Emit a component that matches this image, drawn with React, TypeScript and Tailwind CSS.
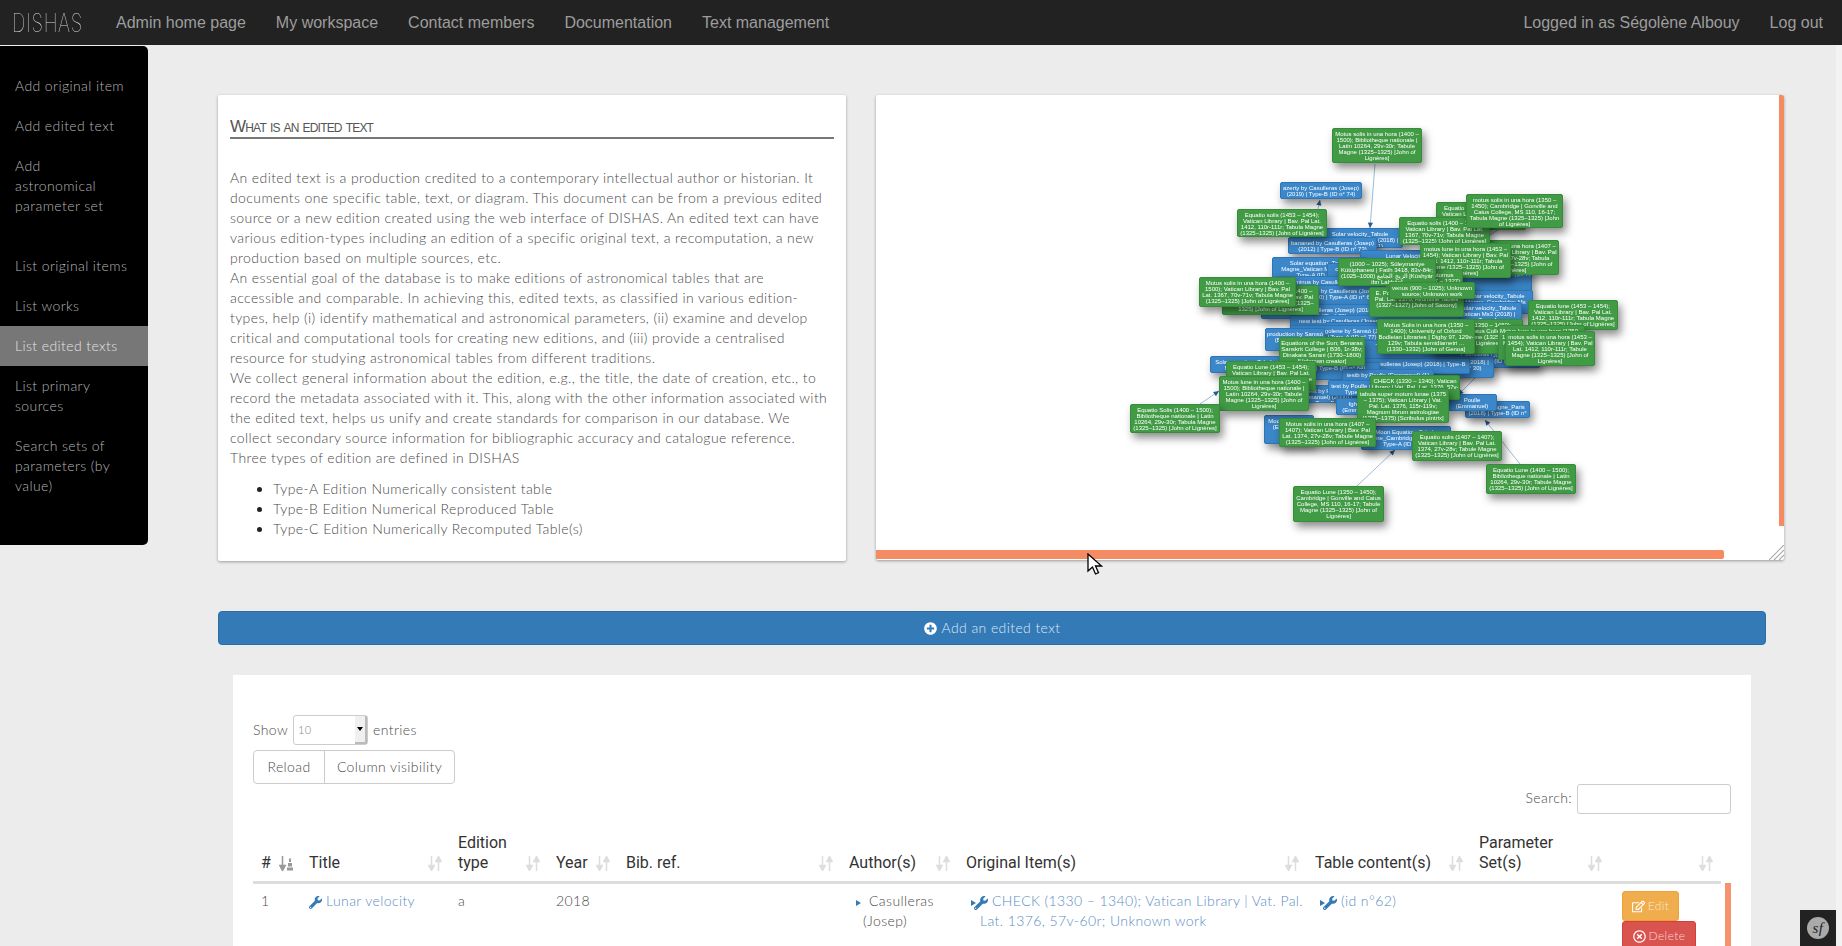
import React from 'react';
import { FaWrench, FaPlusCircle, FaRegEdit, FaRegTimesCircle } from 'react-icons/fa';

const OX = 876, OY = 95;
type N = [number, number, number, number, string];
const blues: N[] = [
  [1317, 228, 86, 20, 'Solar velocity_Tabule Magne_Vatican Ms1 (2018) | Type-A (ID n° 61)'],
  [1280, 182, 82, 17, 'azerty by Casulleras (Josep) (2019) | Type-B (ID n° 74)'],
  [1288, 237, 89, 17, 'bananed by Casulleras (Josep) (2012) | Type-B (ID n° 73)'],
  [1360, 250, 110, 30, 'Lunar Velocity_Tabule Magne_Cambridge Ms (2018) | Type-A (ID n° 66)'],
  [1440, 262, 92, 30, 'Solar velocity_Tabule Magne_Paris Ms (2018) | Type-A'],
  [1272, 257, 95, 26, 'Solar equation_Tabule Magne_Vatican Ms1 (2018) | Type-A (ID n° 60)'],
  [1327, 263, 50, 16, 'couscous by Casulleras'],
  [1275, 276, 100, 30, 'Solar minus by Casulleras (Josep) (2000) | Type-A (ID n° 63)'],
  [1296, 285, 90, 26, 'minus by Casulleras (Josep) (2000) | Type-A (ID n° 63)'],
  [1261, 304, 125, 15, 'Expected by Casulleras (Josep) (2018) | Type-C (ID n° 70)'],
  [1458, 290, 75, 24, 'Lunar velocity_Tabule Magne_Cambridge Ms (2018) | Type-A'],
  [1454, 302, 68, 22, 'Solar velocity_Tabule Vatican Ms3 (2018) | Type-A'],
  [1290, 315, 170, 18, 'new test by Casulleras (Josep) (2018) | Type-A (ID n° 71)'],
  [1325, 322, 150, 20, 'test by Casulleras | Type-B'],
  [1290, 325, 105, 24, 'Edition_Segolene by Samsó (Julio) (2017) | Type-A (ID n° 77)'],
  [1265, 328, 60, 23, 'production by Samsó (Bernard) 2018'],
  [1360, 340, 120, 30, 'Type-A (ID n° 52) Solar edition by Casulleras'],
  [1454, 349, 86, 19, 'Casulleras (Josep) (2015) | Type-A (ID n° 52)'],
  [1423, 356, 71, 22, 'Critical Edition (2018) | Type-A (ID n° 30)'],
  [1210, 356, 70, 17, 'Solar equation_Tabule Magne_Vatican'],
  [1340, 358, 130, 16, 'Edition by Casulleras (Josep) (2018) | Type-B'],
  [1290, 362, 90, 18, 'test | Type-B (ID n° 64)'],
  [1290, 385, 70, 18, 'test by Poulle (Emmanuel) (2000) | Type-B'],
  [1342, 369, 92, 15, 'testb by Poulle (Emmanuel) (1) Type-B (ID)'],
  [1328, 380, 80, 16, 'test by Poulle (Emmanuel) | Type-B (ID n° 72)'],
  [1336, 398, 60, 17, 'fgh by Poulle (Emmanuel) 2000'],
  [1465, 401, 65, 17, 'Tabule Magne_Paris (2018) | Type-B (ID n° 10)'],
  [1447, 394, 50, 17, 'Poulle (Emmanuel) Type-B (ID n° 65)'],
  [1264, 415, 50, 29, 'Moon by Poulle (Emmanuel) (2000)'],
  [1361, 426, 90, 24, 'Moon Equation_Tabule Magne_Cambridge Ms (2018) | Type-A (ID n° 67)'],
];
const greens: N[] = [
  [1332, 128, 90, 35, 'Motus solis in una hora (1400 – 1500); Bibliotheque nationale | Latin 10264, 29v-30r; Tabule Magne (1325–1325) [John of Lignères]'],
  [1237, 209, 90, 28, 'Equatio solis (1453 – 1454); Vatican Library | Bav. Pal Lat. 1412, 110r-111r; Tabula Magne (1325–1325) [John of Lignères]'],
  [1469, 240, 90, 35, 'motus solis in una hora (1407 – 1407); Vatican Library | Bav. Pal Lat. 1374, 27v-28v; Tabula Magne (1325–1325) [John of Lignères]'],
  [1436, 202, 90, 28, 'Equatio lune (1407 – 1407); Vatican Library | Bav. Pal Lat. 1374, 27v-28v; Tabula Magne'],
  [1399, 217, 91, 28, 'Equatio solis (1400 – 1450); Vatican Library | Bav. Pal Lat. 1367, 70v-71v; Tabula Magne (1325–1325) [John of Lignères]'],
  [1466, 194, 97, 34, 'motus solis in una hora (1350 – 1450); Cambridge | Gonville and Caius College, MS 110, 16-17; Tabula Magne (1325–1325) [John of Lignères]'],
  [1420, 243, 91, 35, 'motus lune in una hora (1453 – 1454); Vatican Library | Bav. Pal Lat. 1412, 110r-111r; Tabula Magne (1325–1325) [John of Lignères]'],
  [1420, 269, 43, 14, 'Saturnus (1327 – 1327) Astronomice'],
  [1338, 258, 98, 28, '(1000 – 1025); Süleymaniye Kütüphanesi | Fatih 3418, 83v-84r; الزيج الجامع (1000–1025) [Kūshyār ibn Labbān]'],
  [1222, 285, 97, 30, 'Motus solis in una hora (1400 – 1450); Vatican Library | Bav. Pal Lat. 1367; Tabula Magne (1325–1325) [John of Lignères]'],
  [1199, 277, 97, 30, 'Motus solis in una hora (1400 – 1500); Vatican Library | Bav. Pal Lat. 1367, 70v-71v; Tabula Magne (1325–1325) [John of Lignères]'],
  [1369, 287, 95, 30, 'E. Poulle; Vatican Library | Vat. Pal. Lat. 1376; Alfonsine Tables (1327–1327) [John of Saxony]'],
  [1389, 282, 86, 17, 'venus (900 – 1025); Unknown source; Unknown work'],
  [1528, 300, 90, 30, 'Equatio lune (1453 – 1454); Vatican Library | Bav. Pal Lat. 1412, 110r-111r; Tabula Magne (1325–1325) [John of Lignères]'],
  [1430, 319, 93, 35, 'motus lune (1350 – 1450); Gonville and Caius College, 16-17; Tabula Magne (1325–1325) [John of Lignères]'],
  [1377, 319, 98, 35, 'Motus Solis in una hora (1350 – 1400); University of Oxford Bodleian Libraries | Digby 97, 129v-129v; Tabula semidiametri ... (1330–1332) [John of Genoa]'],
  [1498, 325, 87, 35, 'Motus lune in una hora (1350 – 1450); Vatican Library; Tabula Magne (1325–1325) [John of Lignères]'],
  [1505, 331, 90, 35, 'motus solis in una hora (1453 – 1454); Vatican Library | Bav. Pal Lat. 1412, 110r-111r; Tabule Magne (1325–1325) [John of Lignères]'],
  [1279, 337, 86, 29, 'Equations of the Sun; Benaras Sanskrit College | B36, 1r-38v; Dinakara Sarani (1730–1800) [Unknown creator]'],
  [1226, 361, 90, 30, 'Equatio Lune (1453 – 1454); Vatican Library | Bav. Pal Lat. 1412, 110r-111r; Tabula Magne'],
  [1219, 376, 90, 35, 'Motus lune in una hora (1400 – 1500); Bibliotheque nationale | Latin 10264, 29v-30r; Tabule Magne (1325–1325) [John of Lignères]'],
  [1130, 404, 90, 29, 'Equatio Solis (1400 – 1500); Bibliotheque nationale | Latin 10264, 29v-30r; Tabula Magne (1325–1325) [John of Lignères]'],
  [1370, 375, 90, 25, 'CHECK (1330 – 1340); Vatican Library | Vat. Pal. Lat. 1376, 57v-60r; Unknown work'],
  [1357, 388, 92, 35, 'tabula super motum lunae (1375 – 1375); Vatican Library | Vat. Pal. Lat. 1376, 115r-119v; Magnum librum astrologiae (1375–1375) [Scribulus pintrix]'],
  [1279, 418, 97, 29, 'Motus solis in una hora (1407 – 1407); Vatican Library | Bav. Pal Lat. 1374, 27v-28v; Tabule Magne (1325–1325) [John of Lignères]'],
  [1412, 431, 90, 30, 'Equatio solis (1407 – 1407); Vatican Library | Bav. Pal Lat. 1374, 27v-28v; Tabule Magne (1325–1325) [John of Lignères]'],
  [1486, 464, 90, 30, 'Equatio Lune (1400 – 1500); Bibliotheque nationale | Latin 10264, 29v-30r; Tabule Magne (1325–1325) [John of Lignères]'],
  [1293, 486, 91, 36, 'Equatio Lune (1350 – 1450); Cambridge | Gonville and Caius College, MS 110, 16-17; Tabule Magne (1325–1325) [John of Lignères]'],
];
const lines = [
  [1375, 164, 1370, 228],
  [1318, 209, 1320, 200],
  [1200, 404, 1219, 391],
  [1357, 486, 1395, 450],
  [1520, 464, 1485, 420],
  [1475, 378, 1458, 395],
  [1490, 235, 1510, 222],
];

function Node({ n, green }: { n: N; green: boolean }) {
  const [x, y, w, h, t] = n;
  return (
    <div
      style={{ left: x - OX, top: y - OY, width: w, height: h }}
      className={
        'absolute overflow-hidden rounded-[2px] border pt-[1.5px] text-center text-[6px] leading-[6px] text-white shadow-[3px_5px_8px_rgba(0,0,0,0.45)] ' +
        (green ? 'border-[#378c3b] bg-[#419b45]' : 'border-[#2f75b5] bg-[#3b87c9]')
      }
    >
      {t}
    </div>
  );
}

function Sort({ active }: { active?: boolean }) {
  const c = active ? '#999' : '#ddd';
  return (
    <svg width="14" height="15" viewBox="0 0 14 15" className="mb-[2px] shrink-0">
      <path d="M3.500 0v12M0.800 9.500 3.500 14.500 6.200 9.500z" stroke={c} fill={c} strokeWidth="1.500" />
      {active ? (
        <path d="M8 14.500h6v-3H8zM9 10.500h4V7H9zM10 6h2V2.500h-2z" fill={c} />
      ) : (
        <path d="M10.500 15V3M7.800 5.500 10.500 0.500 13.200 5.500z" stroke={c} fill={c} strokeWidth="1.500" />
      )}
    </svg>
  );
}

const headers: [React.ReactNode, string][] = [
  ['#', 'w-[48px]'],
  ['Title', 'w-[149px]'],
  [<>Edition<br />type</>, 'w-[98px]'],
  ['Year', 'w-[70px]'],
  ['Bib. ref.', 'w-[223px]'],
  ['Author(s)', 'w-[117px]'],
  ['Original Item(s)', 'w-[349px]'],
  ['Table content(s)', 'w-[164px]'],
  [<>Parameter<br />Set(s)</>, 'w-[139px]'],
  ['', 'w-[111px]'],
];

const nav = ['Admin home page', 'My workspace', 'Contact members', 'Documentation', 'Text management'];

function Side({ children, active, cls }: { children: React.ReactNode; active?: boolean; cls?: string }) {
  return (
    <div className={'px-[15px] py-[10px] whitespace-nowrap ' + (active ? 'bg-[#777] text-[#e4e4e4] ' : '') + (cls || '')}>{children}</div>
  );
}

export default function App() {
  return (
    <div className="flex h-[946px] w-full flex-col overflow-hidden bg-[#ececec] font-['Lato',sans-serif] text-[14px] leading-[20px] font-light tracking-[0.4px] text-[#4a4a4a]">
      <nav className="flex h-[45px] shrink-0 items-center bg-[#222] font-['Liberation_Sans_Narrow','Liberation_Sans',sans-serif] text-[16px] font-normal tracking-normal text-[#9d9d9d]">
        <span className="ml-[12px] inline-block w-[104px] origin-left scale-x-[0.72] font-['Inter',sans-serif] text-[26px] font-thin tracking-[1px] text-[#ddd]">DISHAS</span>
        <div className="flex gap-[30px]">
          {nav.map((t) => <span key={t}>{t}</span>)}
        </div>
        <div className="ml-auto flex gap-[30px] pr-[19px]">
          <span>Logged in as Ségolène Albouy</span>
          <span>Log out</span>
        </div>
      </nav>
      <div className="flex min-h-0 flex-1">
        <aside className="mt-px h-[499px] w-[148px] shrink-0 rounded-r-[5px] bg-black pt-[20px] text-[#b5b5b5]">
          <Side>Add original item</Side>
          <Side>Add edited text</Side>
          <Side cls="mb-[20px]">Add<br />astronomical<br />parameter set</Side>
          <Side>List original items</Side>
          <Side>List works</Side>
          <Side active>List edited texts</Side>
          <Side>List primary<br />sources</Side>
          <Side>Search sets of<br />parameters (by<br />value)</Side>
        </aside>
        <main className="relative flex-1 pl-[70px] pt-[50px]">
          <div className="flex gap-[30px]">
            <section className="h-[466px] w-[628px] rounded-[2px] bg-white px-[12px] pt-[22px] shadow-[0_1px_3px_rgba(0,0,0,0.35)]">
              <h2 className="border-b-2 border-[#777] font-['Liberation_Sans_Narrow','Liberation_Sans',sans-serif] text-[17px] leading-[20px] font-normal tracking-[-0.8px] text-[#555] [font-variant:small-caps]">What is an edited text</h2>
              <div className="mt-[29px] whitespace-nowrap">
                An edited text is a production credited to a contemporary intellectual author or historian. It<br />
                documents one specific table, text, or diagram. This document can be from a previous edited<br />
                source or a new edition created using the web interface of DISHAS. An edited text can have<br />
                various edition-types including an edition of a specific original text, a recomputation, a new<br />
                production based on multiple sources, etc.<br />
                An essential goal of the database is to make editions of astronomical tables that are<br />
                accessible and comparable. In achieving this, edited texts, as classified in various edition-<br />
                types, help (i) identify mathematical and astronomical parameters, (ii) examine and develop<br />
                critical and computational tools for creating new editions, and (iii) provide a centralised<br />
                resource for studying astronomical tables from different traditions.<br />
                We collect general information about the edition, e.g., the title, the date of creation, etc., to<br />
                record the metadata associated with it. This, along with the other information associated with<br />
                the edited text, helps us unify and create standards for comparison in our database. We<br />
                collect secondary source information for bibliographic accuracy and catalogue reference.<br />
                Three types of edition are defined in DISHAS
              </div>
              <ul className="mt-[11px] ml-[43px] list-disc whitespace-nowrap marker:text-[#222]">
                <li>Type-A Edition Numerically consistent table</li>
                <li>Type-B Edition Numerical Reproduced Table</li>
                <li>Type-C Edition Numerically Recomputed Table(s)</li>
              </ul>
            </section>
            <section className="relative h-[465px] w-[908px] overflow-hidden rounded-[2px] bg-white font-['Liberation_Sans',sans-serif] font-normal tracking-normal shadow-[0_1px_3px_rgba(0,0,0,0.35)]">
              <div className="absolute inset-0 blur-[0.4px]">
                <svg className="absolute inset-0" width="908" height="465">
                  {lines.map(([a, b, c, d], i) => {
                    const x1 = a - OX, y1 = b - OY, x2 = c - OX, y2 = d - OY;
                    const ang = Math.atan2(y2 - y1, x2 - x1);
                    const p = (r: number, s: number) => `${x2 + r * Math.cos(ang + s)},${y2 + r * Math.sin(ang + s)}`;
                    return (
                      <g key={i}>
                        <line x1={x1} y1={y1} x2={x2} y2={y2} stroke="#9dbbd9" strokeWidth="1" />
                        <polygon points={`${x2},${y2} ${p(-6, 0.45)} ${p(-6, -0.45)}`} fill="#255f94" />
                      </g>
                    );
                  })}
                </svg>
                {blues.map((n, i) => <Node key={i} n={n} green={false} />)}
                {greens.map((n, i) => <Node key={i} n={n} green />)}
              </div>
              <div className="absolute bottom-[1px] left-0 h-[9px] w-[848px] rounded-r-[2px] bg-[#f48b63]" />
              <div className="absolute top-0 right-0 h-[431px] w-[5px] bg-[#f48b63]" />
              <svg className="absolute right-0 bottom-0" width="15" height="15" viewBox="0 0 15 15">
                <path d="M0 15 15 0M5 15 15 5M10 15 15 10" stroke="#aaa" strokeWidth="1.200" />
              </svg>
            </section>
          </div>
          <button className="mt-[50px] flex h-[34px] w-[1548px] items-center justify-center gap-[5px] rounded-[4px] border border-[#2e6da4] bg-[#337ab7] text-[#dfe9f3]">
            <FaPlusCircle size={13} className="text-white" /> Add an edited text
          </button>
          <section className="relative mt-[30px] ml-[15px] h-[300px] w-[1518px] bg-white px-[20px] pt-[40px]">
            <div className="flex h-[30px] items-center gap-[5px]">
              Show
              <span className="flex h-[30px] w-[75px] items-center justify-between rounded-[3px] border border-[#ccc] pl-[4px] text-[11px] text-[#888]">
                10
                <span className="flex h-full w-[12px] items-center justify-center border-r-2 border-b-2 border-[#bbb] bg-[#f0f0f0]">
                  <span className="border-x-[3px] border-t-[4px] border-x-transparent border-t-black" />
                </span>
              </span>
              entries
            </div>
            <div className="mt-[5px] flex h-[34px] w-[202px] rounded-[4px] border border-[#ccc]">
              <span className="flex w-[71px] items-center justify-center border-r border-[#ccc]">Reload</span>
              <span className="flex flex-1 items-center justify-center">Column visibility</span>
            </div>
            <div className="flex items-center justify-end gap-[5px]">
              <span className="pb-[2px]">Search:</span>
              <span className="h-[30px] w-[154px] rounded-[3px] border border-[#ccc]" />
            </div>
            <table className="mt-[11px] w-[1468px] table-fixed border-collapse">
              <thead>
                <tr className="border-b-[3px] border-[#ddd]">
                  {headers.map(([h, w], i) => (
                    <th key={i} className={w + " px-[8px] pt-[8px] pb-[8px] text-left align-bottom font-['Roboto',sans-serif] text-[16px] font-normal tracking-normal text-[#333]"}>
                      <div className="flex items-end justify-between">
                        <span className="whitespace-nowrap">{h}</span>
                        <Sort active={i === 0} />
                      </div>
                    </th>
                  ))}
                </tr>
              </thead>
              <tbody>
                <tr className="align-top">
                  <td className="px-[8px] py-[7px]">1</td>
                  <td className="px-[8px] py-[7px] whitespace-nowrap text-[#5b8ec2]"><FaWrench size={13} className="mr-[4px] inline text-[#337ab7]" />Lunar velocity</td>
                  <td className="px-[8px] py-[7px]">a</td>
                  <td className="px-[8px] py-[7px]">2018</td>
                  <td />
                  <td className="py-[7px] pr-[4px] pl-[15px] whitespace-nowrap">
                    <span className="mr-[8px] inline-block border-y-[3px] border-l-[5px] border-y-transparent border-l-[#337ab7] align-middle" />Casulleras<br /><span className="pl-[7px]">(Josep)</span>
                  </td>
                  <td className="py-[7px] pr-[4px] pl-[13px] whitespace-nowrap text-[#5b8ec2]">
                    <span className="mr-[-2px] inline-block border-y-[3px] border-l-[5px] border-y-transparent border-l-[#337ab7] align-middle" />
                    <FaWrench size={14} className="mr-[4px] inline text-[#337ab7]" />CHECK (1330 – 1340); Vatican Library | Vat. Pal.<br /><span className="pl-[9px]">Lat. 1376, 57v-60r; Unknown work</span>
                  </td>
                  <td className="py-[7px] pr-[4px] pl-[13px] whitespace-nowrap text-[#5b8ec2]">
                    <span className="mr-[-2px] inline-block border-y-[3px] border-l-[5px] border-y-transparent border-l-[#337ab7] align-middle" />
                    <FaWrench size={14} className="mr-[4px] inline text-[#337ab7]" />(id n°62)
                  </td>
                  <td />
                  <td className="pt-[7px] pl-[12px]">
                    <div className="flex h-[30px] w-[57px] items-center justify-center gap-[3px] rounded-[3px] border border-[#eea236] bg-[#f0ad4e] text-[12px] text-[#fbe8cd]">
                      <FaRegEdit size={13} className="text-white" /> Edit
                    </div>
                    <div className="flex h-[30px] w-[74px] items-center justify-center gap-[3px] rounded-[3px] border border-[#d43f3a] bg-[#d9534f] text-[12px] text-[#f8d8d6]">
                      <FaRegTimesCircle size={13} className="text-white" /> Delete
                    </div>
                  </td>
                </tr>
              </tbody>
            </table>
            <div className="absolute top-[208px] right-[20px] h-[100px] w-[6px] bg-[#f4936e]" />
          </section>
          <svg className="absolute top-[508px] left-[939px]" width="16" height="24" viewBox="0 0 16 24">
            <path d="M1 1v17l4.500-4 3 7 3-1.300-3-6.700h6z" fill="#fff" stroke="#000" strokeWidth="1.300" />
          </svg>
          <div className="absolute right-0 bottom-0 flex h-[36px] w-[36px] items-center justify-center bg-[#222]">
            <span className="flex h-[22px] w-[22px] items-center justify-center rounded-full bg-[#aaa] font-['Liberation_Serif',serif] text-[15px] text-[#222] italic">sf</span>
          </div>
        </main>
        <div className="w-[6px] shrink-0 bg-[#f3f3f3]" />
      </div>
    </div>
  );
}
